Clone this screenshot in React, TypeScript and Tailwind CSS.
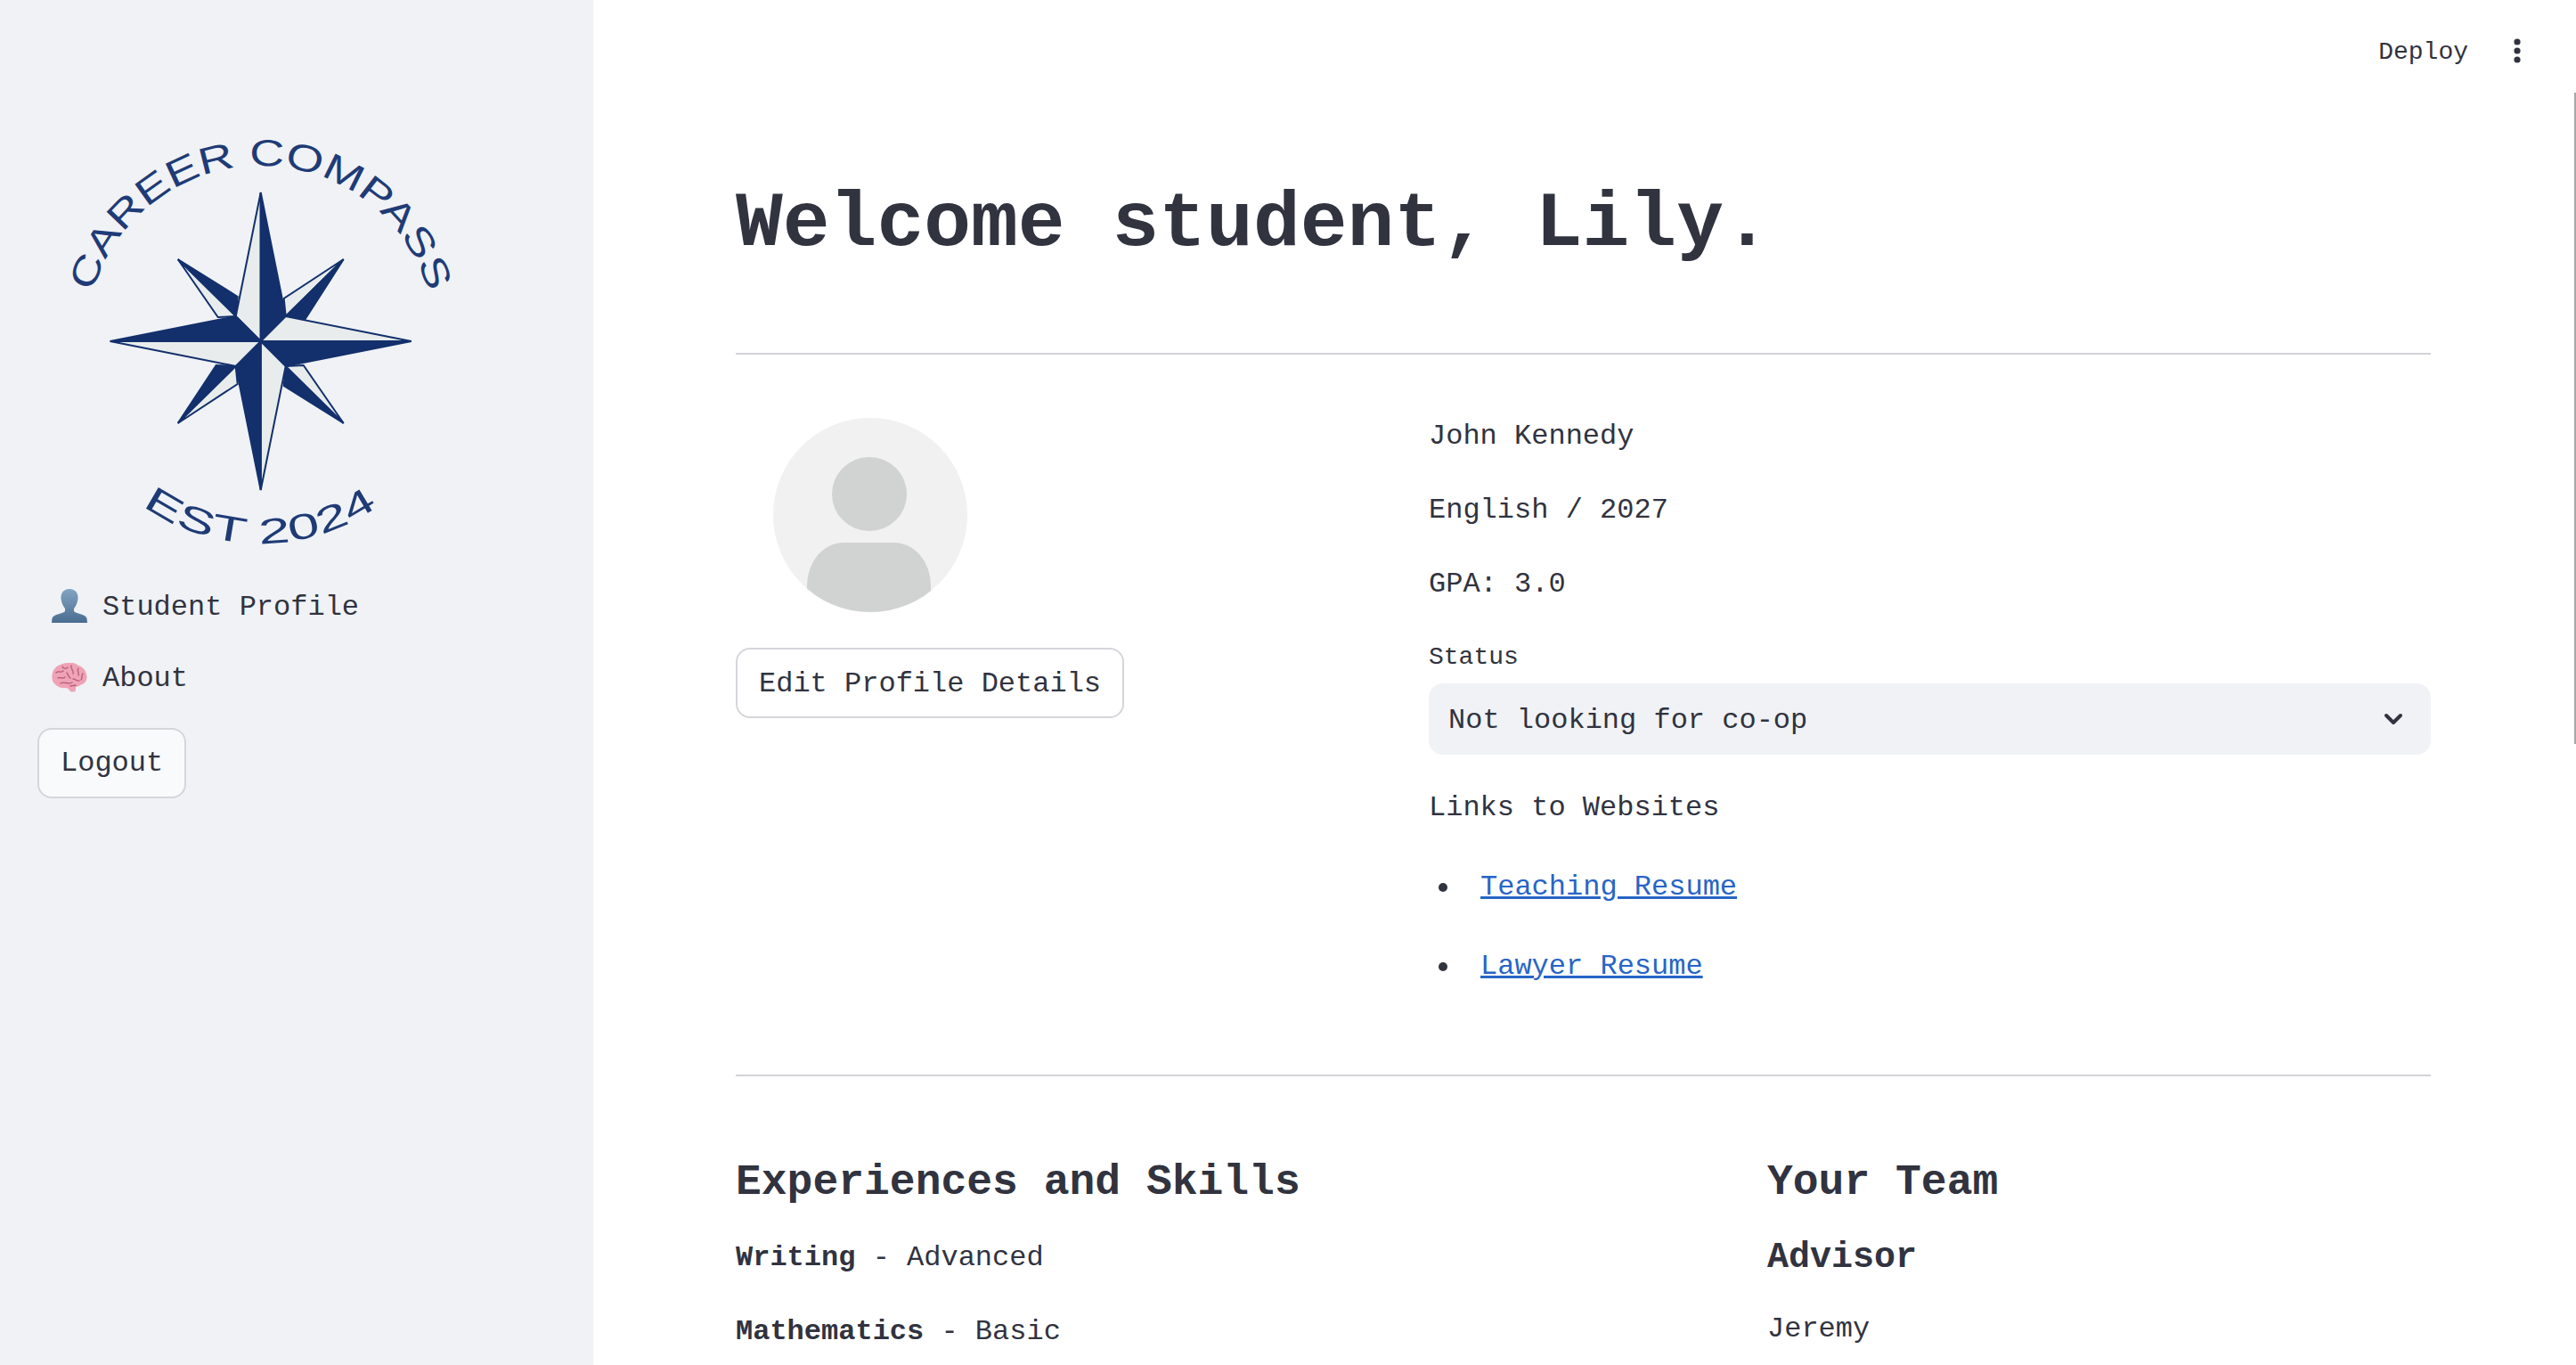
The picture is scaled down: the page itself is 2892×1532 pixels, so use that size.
import { ChevronDown } from "lucide-react";

const NAVY = "#13306c";
const PALE = "#e8ecec";
const LETTERING = "#1f3b76";

function Logo() {
  const cx = 292.7;
  const cy = 383;
  const pts = (list: number[][]) => list.map(([x, y]) => `${cx + x},${cy + y}`).join(" ");
  return (
    <svg className="block mt-[100px]" width="666" height="520" viewBox="0 100 666 520">
      <defs>
        <path id="arc-top" d="M104.3 328 A196 196 0 0 1 481.1 328" />
        <path id="arc-bottom" d="M160.2 567.6 A228 228 0 0 0 425.2 567.6" />
      </defs>
      <text fill={LETTERING} fontFamily="'Liberation Sans', sans-serif" fontSize="42">
        <textPath href="#arc-top" textLength="506" lengthAdjust="spacingAndGlyphs">CAREER COMPASS</textPath>
      </text>
      <text fill={LETTERING} fontFamily="'Liberation Sans', sans-serif" fontSize="40">
        <textPath href="#arc-bottom" textLength="281" lengthAdjust="spacingAndGlyphs">EST 2024</textPath>
      </text>
      <g stroke={NAVY} strokeWidth="2" strokeLinejoin="miter">
        {/* diagonal points */}
        <polygon fill={NAVY} points={pts([[-93, -92], [-26, -50], [-28, -28]])} />
        <polygon fill={PALE} points={pts([[-93, -92], [-48, -27], [-28, -28]])} />
        <polygon fill={PALE} points={pts([[93, -92], [26, -48], [28, -28]])} />
        <polygon fill={NAVY} points={pts([[93, -92], [50, -25], [28, -28]])} />
        <polygon fill={NAVY} points={pts([[93, 92], [26, 50], [28, 28]])} />
        <polygon fill={PALE} points={pts([[93, 92], [48, 27], [28, 28]])} />
        <polygon fill={NAVY} points={pts([[-93, 92], [-50, 27], [-28, 28]])} />
        <polygon fill={PALE} points={pts([[-93, 92], [-26, 48], [-28, 28]])} />
        {/* main points */}
        <polygon fill={PALE} points={pts([[0, -167], [-28, -28], [0, 0]])} />
        <polygon fill={NAVY} points={pts([[0, -167], [28, -28], [0, 0]])} />
        <polygon fill={PALE} points={pts([[169, 0], [28, -28], [0, 0]])} />
        <polygon fill={NAVY} points={pts([[169, 0], [28, 28], [0, 0]])} />
        <polygon fill={PALE} points={pts([[0, 167], [28, 28], [0, 0]])} />
        <polygon fill={NAVY} points={pts([[0, 167], [-28, 28], [0, 0]])} />
        <polygon fill={PALE} points={pts([[-169, 0], [-28, 28], [0, 0]])} />
        <polygon fill={NAVY} points={pts([[-169, 0], [-28, -28], [0, 0]])} />
      </g>
    </svg>
  );
}

function BustIcon() {
  return (
    <svg width="40" height="38" viewBox="0 0 40 38">
      <defs>
        <linearGradient id="bust" x1="0" y1="0" x2="0" y2="1">
          <stop offset="0" stopColor="#83a5c3" />
          <stop offset="1" stopColor="#4a6d90" />
        </linearGradient>
      </defs>
      <path
        fill="url(#bust)"
        d="M20 0 C13 0 10 5 10.5 11 C11 15 12.5 19 15 22 L15 25 C13 28 2 28 0.5 33 L0 38 L40 38 L39.5 33 C38 28 27 28 25 25 L25 22 C27.5 19 29 15 29.5 11 C30 5 27 0 20 0 Z"
      />
    </svg>
  );
}

function BrainIcon() {
  return (
    <svg width="40" height="33" viewBox="0 0 40 33" fill="none">
      <path
        fill="#efa3b6"
        d="M17 0 C22 -1 27 0 30 3 C35 4 39 9 39.5 15 C40 20 37 24 32 25 C31 26 29 27 27 27 L27 30 C27 33 22 33.5 20 31 C19 29 18 28 15 28 C10 29 6 26 4 24 C1 22 0 18 0.5 14 C1 8 5 3 10 2 C12 1 14 0 17 0 Z"
      />
      <path
        stroke="#b9607c"
        strokeWidth="1.4"
        strokeLinecap="round"
        d="M5 11 C8 8 10 12 13 9 M12 4 C13 7 16 7 18 5 M22 3 C21 7 25 8 24 12 M30 6 C28 9 31 11 30 14 M35 12 C33 14 35 17 33 19 M7 17 C10 15 12 19 15 16 M17 11 C19 13 18 16 21 17 M10 23 C14 20 18 25 23 22 M24 18 C27 18 28 21 31 20 M21 26 C23 25 25 26 27 25"
      />
    </svg>
  );
}

function Field({ children }: { children: React.ReactNode }) {
  return <p className="h-[51px] leading-[55px] text-[32px] mb-[32px]">{children}</p>;
}

export default function App() {
  return (
    <div className="flex h-screen overflow-hidden bg-white text-[#31333f] font-['Liberation_Mono',monospace]">
      <aside className="w-[666px] shrink-0 bg-[#f0f2f6]">
        <Logo />
        <nav className="mt-[40px]">
          <div className="flex items-center h-[40px] pl-[58px] gap-[17px] text-[32px]">
            <BustIcon />
            <span className="pt-[3px]">Student Profile</span>
          </div>
          <div className="flex items-center h-[40px] mt-[40px] pl-[58px] gap-[17px] text-[32px]">
            <BrainIcon />
            <span className="pt-[3px]">About</span>
          </div>
        </nav>
        <button className="block ml-[42px] mt-[37px] h-[79px] px-[24px] rounded-[16px] border-2 border-[#d5d6da] bg-[#f9fafc] text-[32px]">
          Logout
        </button>
      </aside>

      <main className="relative flex-1 min-w-0 overflow-hidden">
        <div className="absolute right-0 top-[104px] w-[2px] h-[731px] bg-[#a8a8a8]" />
        <header className="flex items-center justify-end h-[114px] pr-[62px] gap-[51px]">
          <span className="pt-[3px] text-[28px]">Deploy</span>
          <svg width="8" height="28" viewBox="0 0 8 28" fill="#31333f">
            <circle cx="4" cy="4" r="3.6" />
            <circle cx="4" cy="14" r="3.6" />
            <circle cx="4" cy="24" r="3.6" />
          </svg>
        </header>

        <div className="ml-[160px] w-[1903px]">
          <h1 className="mt-[82px] h-[106px] leading-[112px] text-[88px] font-bold">Welcome student, Lily.</h1>
          <hr className="mt-[94px] border-0 h-[2px] bg-[#d2d3d6]" />

          <section className="flex mt-[64px]">
            <div className="w-[778px] shrink-0 pt-[7px]">
              <div className="relative w-[218px] h-[218px] ml-[42px] rounded-full bg-[#f1f1f1] overflow-hidden">
                <div className="absolute left-[66px] top-[44px] w-[84px] h-[83px] rounded-full bg-[#d1d3d2]" />
                <div className="absolute left-[38px] top-[140px] w-[139px] h-[120px] rounded-t-[41px_48px] bg-[#d1d3d2]" />
              </div>
              <button className="block mt-[40px] h-[79px] px-[24px] pt-[2px] rounded-[16px] border-2 border-[#d5d6da] bg-white text-[32px]">
                Edit Profile Details
              </button>
            </div>
            <div className="flex-1 min-w-0">
              <Field>John Kennedy</Field>
              <Field>English / 2027</Field>
              <Field>GPA: 3.0</Field>
              <label className="block mt-[36px] h-[40px] leading-[46px] text-[28px]">Status</label>
              <div className="flex items-center justify-between mt-[12px] h-[80px] pl-[22px] pr-[26px] rounded-[16px] bg-[#f0f2f6] text-[32px]">
                <span className="pt-[4px]">Not looking for co-op</span>
                <ChevronDown className="w-[32px] h-[32px]" strokeWidth={3} />
              </div>
              <p className="mt-[32px] h-[51px] leading-[55px] text-[32px]">Links to Websites</p>
              <ul className="mt-[40px] text-[32px]">
                <li className="flex items-center h-[51px] mb-[38px] pl-[11px]">
                  <span className="w-[10px] h-[10px] rounded-full bg-[#31333f] mr-[37px]" />
                  <a className="text-[#2765c6] underline" href="#">Teaching Resume</a>
                </li>
                <li className="flex items-center h-[51px] pl-[11px]">
                  <span className="w-[10px] h-[10px] rounded-full bg-[#31333f] mr-[37px]" />
                  <a className="text-[#2765c6] underline" href="#">Lawyer Resume</a>
                </li>
              </ul>
            </div>
          </section>

          <hr className="mt-[96px] border-0 h-[2px] bg-[#d2d3d6]" />

          <section className="flex mt-[88px]">
            <div className="w-[1158px] shrink-0">
              <h2 className="h-[58px] leading-[62px] text-[48px] font-bold">Experiences and Skills</h2>
              <p className="mt-[30px] h-[51px] leading-[55px] text-[32px] mb-[32px]">
                <strong>Writing</strong> - Advanced
              </p>
              <p className="h-[51px] leading-[55px] text-[32px]">
                <strong>Mathematics</strong> - Basic
              </p>
            </div>
            <div className="flex-1 min-w-0">
              <h2 className="h-[58px] leading-[62px] text-[48px] font-bold">Your Team</h2>
              <h3 className="mt-[31px] h-[48px] leading-[54px] text-[40px] font-bold">Advisor</h3>
              <p className="mt-[30px] h-[51px] leading-[57px] text-[32px]">Jeremy</p>
            </div>
          </section>
        </div>
      </main>
    </div>
  );
}
